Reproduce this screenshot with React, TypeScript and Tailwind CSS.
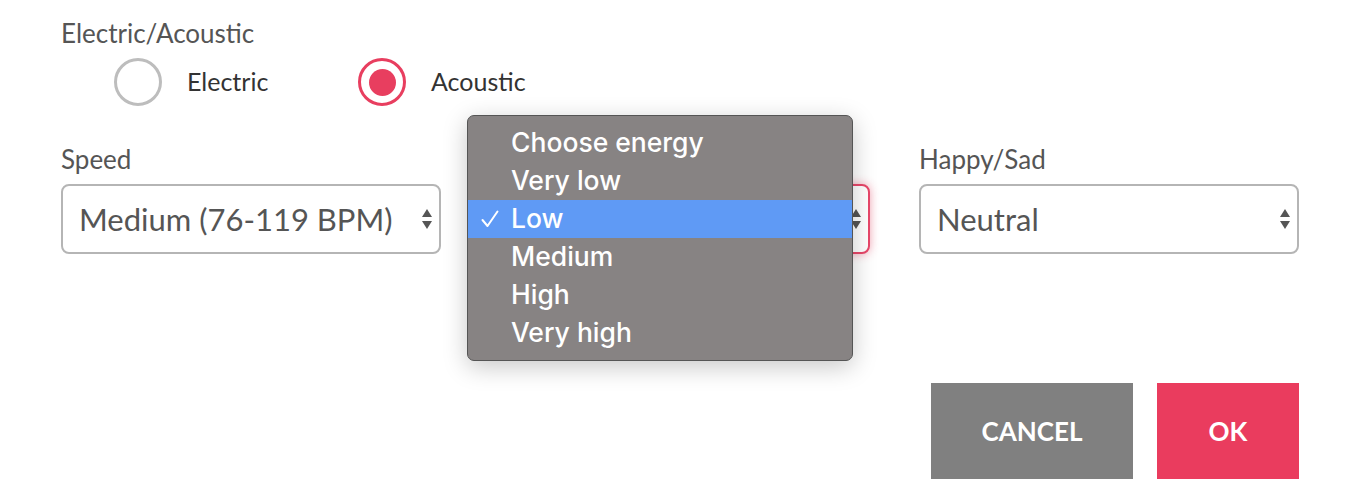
const FUTURA = "font-['Lato','Noto_Sans',sans-serif]";

const energyOptions = ['Choose energy', 'Very low', 'Low', 'Medium', 'High', 'Very high'];

function SelectArrows() {
  return (
    <svg width="12" height="26" viewBox="0 0 12 26" className="shrink-0">
      <path d="M6 3 L11 11 L1 11 Z" fill="#555" />
      <path d="M6 23 L11 15 L1 15 Z" fill="#555" />
    </svg>
  );
}

function FakeSelect({ value, focused }: { value?: string; focused?: boolean }) {
  return (
    <div
      className={
        focused
          ? 'flex h-[70px] items-center justify-between rounded-[8px] border-2 border-[#e8476a] bg-white pl-[16px] pr-[6px] shadow-[0_0_10px_rgba(232,60,94,0.45)]'
          : 'flex h-[70px] items-center justify-between rounded-[8px] border-2 border-[#b5b5b5] bg-white pl-[16px] pr-[6px]'
      }
    >
      <span className="text-[31px] text-[#555]">{value}</span>
      <SelectArrows />
    </div>
  );
}

function Radio({ label, checked }: { label: string; checked?: boolean }) {
  return (
    <div className="flex w-[244px] items-center gap-[25px]">
      {checked ? (
        <span className="flex h-[48px] w-[48px] items-center justify-center rounded-full border-[3px] border-[#e83e5f]">
          <span className="h-[27px] w-[27px] rounded-full bg-[#e83e5f]" />
        </span>
      ) : (
        <span className="h-[48px] w-[48px] rounded-full border-[3px] border-[#bdbdbd]" />
      )}
      <span className="text-[25px] text-[#333]">{label}</span>
    </div>
  );
}

function Check() {
  return (
    <svg width="18" height="18" viewBox="0 0 18 18" fill="none">
      <path d="M1.5 10 L6.5 16 L16.5 1.5" stroke="white" strokeWidth="2" strokeLinecap="round" strokeLinejoin="round" />
    </svg>
  );
}

export default function App() {
  return (
    <div className={`relative h-[500px] w-[1364px] overflow-hidden bg-white ${FUTURA}`}>
      <div className="ml-[61px] w-[1238px] pt-[16px]">
        <p className="text-[26px] leading-[34px] text-[#555]">Electric/Acoustic</p>
        <div className="mt-[8px] flex pl-[53px]">
          <Radio label="Electric" />
          <Radio label="Acoustic" checked />
        </div>

        <div className="mt-[36px] grid grid-cols-[380px_380px_380px] gap-x-[49px]">
          <div>
            <p className="mb-[8px] text-[26px] leading-[34px] text-[#555]">Speed</p>
            <FakeSelect value="Medium (76-119 BPM)" />
          </div>
          <div>
            <div className="mb-[8px] h-[34px]" />
            <FakeSelect focused />
          </div>
          <div>
            <p className="mb-[8px] text-[26px] leading-[34px] text-[#555]">Happy/Sad</p>
            <FakeSelect value="Neutral" />
          </div>
        </div>

        <div className="mt-[129px] flex justify-end gap-[24px]">
          <button className="flex h-[96px] w-[202px] items-center justify-center bg-[#808080] text-[26px] font-bold text-white">
            CANCEL
          </button>
          <button className="flex h-[96px] w-[142px] items-center justify-center bg-[#ea3c5e] text-[26px] font-bold text-white">
            OK
          </button>
        </div>
      </div>

      {/* native select menu, open */}
      <div className="absolute left-[467px] top-[115px] w-[386px] rounded-[7px] border border-[#555] bg-[#878383] py-[8px] font-['Inter','Liberation_Sans',sans-serif] shadow-[0_6px_24px_rgba(0,0,0,0.22)]">
        {energyOptions.map((o) => (
          <div
            key={o}
            className={
              o === 'Low'
                ? 'flex h-[38px] items-center bg-[#5f9af5] text-[26.5px] font-medium text-white'
                : 'flex h-[38px] items-center text-[26.5px] font-medium text-white'
            }
          >
            <span className="flex w-[43px] justify-start pl-[13px]">{o === 'Low' ? <Check /> : null}</span>
            <span>{o}</span>
          </div>
        ))}
      </div>
    </div>
  );
}
